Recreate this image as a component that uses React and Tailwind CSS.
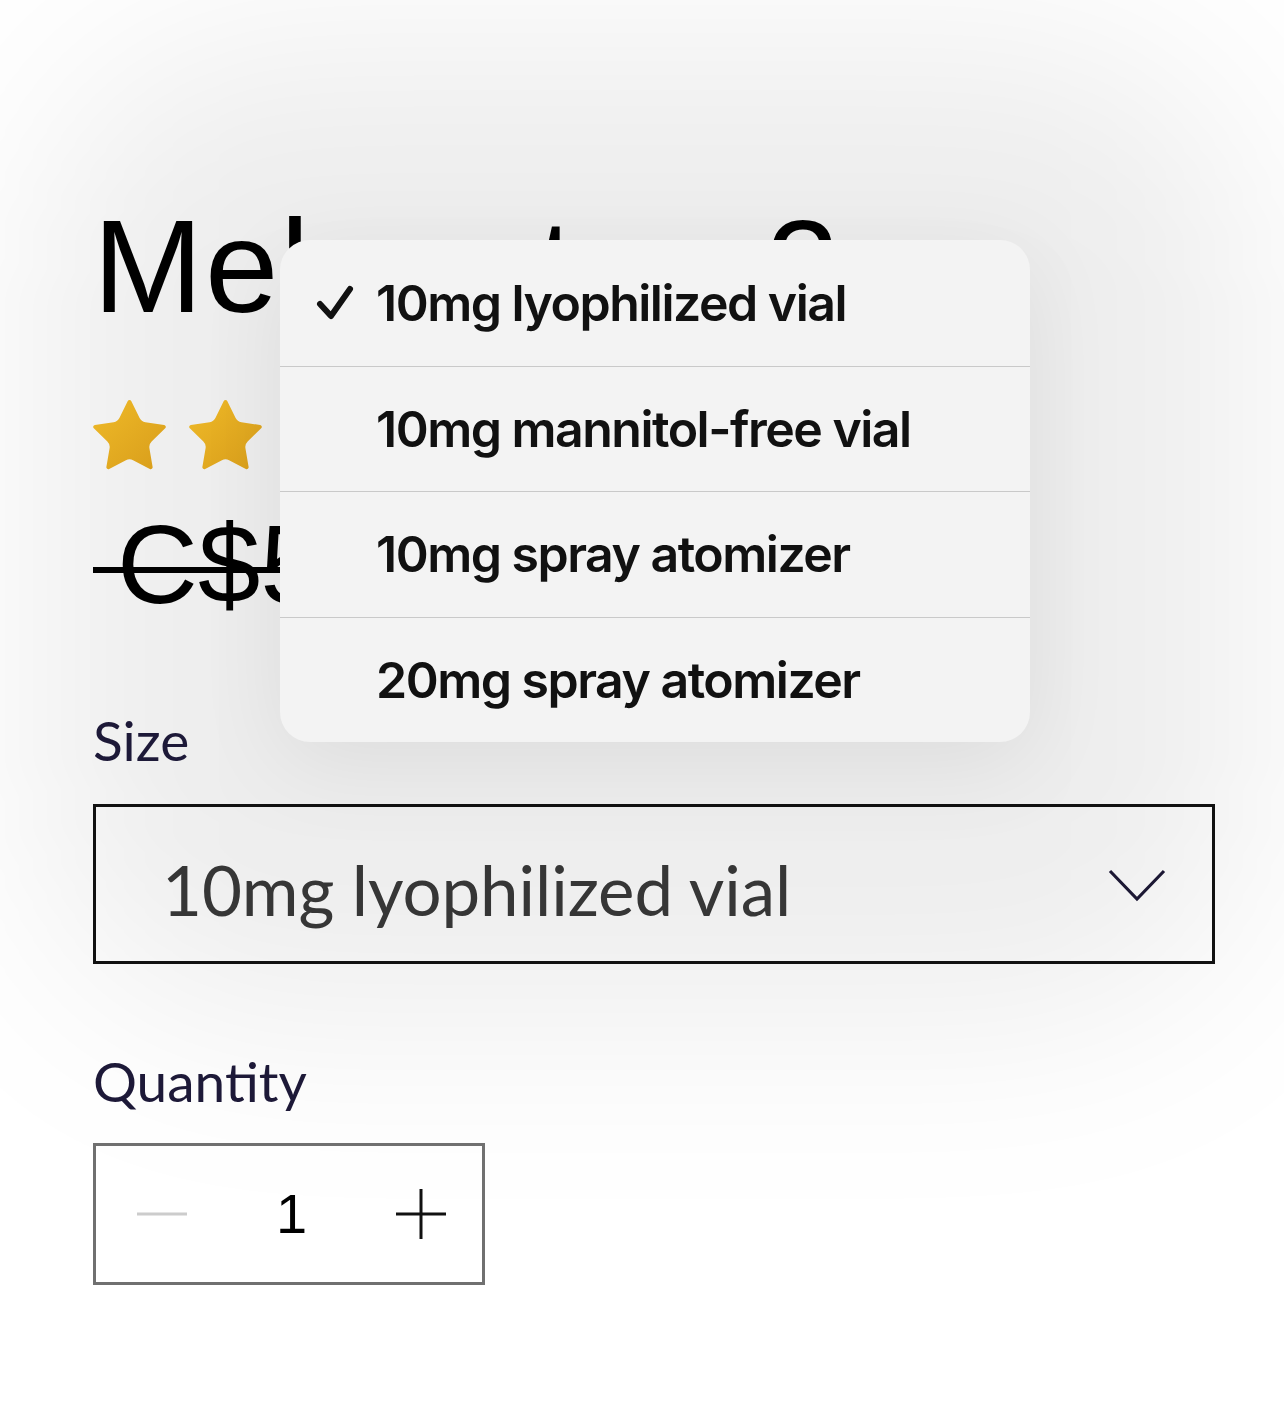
const options = [
  '10mg lyophilized vial',
  '10mg mannitol-free vial',
  '10mg spray atomizer',
  '20mg spray atomizer',
]

const Star = ({ id }) => (
  <svg width="73" height="70" viewBox="2 2 20 19.3" className="shrink-0">
    <defs>
      <linearGradient id={id} x1="0" y1="0" x2="1" y2="1">
        <stop offset="0" stopColor="#efba28" />
        <stop offset="1" stopColor="#d89d1b" />
      </linearGradient>
    </defs>
    <path
      d="M11.525 2.295a.53.53 0 0 1 .95 0l2.31 4.679a2.123 2.123 0 0 0 1.595 1.16l5.166.756a.53.53 0 0 1 .294.904l-3.736 3.638a2.123 2.123 0 0 0-.611 1.878l.882 5.14a.53.53 0 0 1-.771.56l-4.618-2.428a2.122 2.122 0 0 0-1.973 0L6.396 21.01a.53.53 0 0 1-.77-.56l.881-5.139a2.122 2.122 0 0 0-.611-1.879L2.16 9.795a.53.53 0 0 1 .294-.906l5.165-.755a2.122 2.122 0 0 0 1.597-1.16z"
      fill={`url(#${id})`}
    />
  </svg>
)

const App = () => {
  return (
    <div className="relative w-full min-h-[1414px] overflow-hidden bg-white font-['Lato',sans-serif]">
      {/* soft haze the menu throws over the page */}
      <div className="pointer-events-none absolute left-[40px] top-[40px] h-[980px] w-[1210px] rounded-[220px] bg-black/[0.07] blur-[100px]"></div>

      <div className="relative pl-[93px] pr-[69px] pt-[201px]">
        <h1 className="font-['Liberation_Sans',Arial,sans-serif] text-[132px] leading-none tracking-[2px] text-black whitespace-nowrap">
          Melanotan 2
        </h1>

        <div className="mt-[67px] flex gap-[23px]">
          {[0, 1, 2, 3, 4].map((i) => (
            <Star key={i} id={`star-${i}`} />
          ))}
        </div>

        <div className="relative mt-[39px] inline-block">
          <span className="block pl-[24px] font-['Liberation_Sans',Arial,sans-serif] text-[112px] leading-none text-black">
            C$59.99
          </span>
          <span className="absolute left-0 right-0 top-[58px] h-[6px] bg-black"></span>
        </div>

        <p className="mt-[92px] text-[55px] leading-none text-[#1d1938]">Size</p>

        <div className="mt-[36px] flex h-[160px] items-center justify-between border-[3px] border-[#111] pl-[66px] pr-[46px]">
          <span className="mt-[10px] text-[69px] leading-none tracking-[-0.1px] text-[#363636]">10mg lyophilized vial</span>
          <svg width="58" height="34" viewBox="0 0 58 34" className="mb-[-2px]">
            <polyline points="2,3 29,31 56,3" fill="none" stroke="#1c1834" strokeWidth="3.2" />
          </svg>
        </div>

        <p className="mt-[90px] text-[55px] leading-none text-[#1d1938]">Quantity</p>

        <div className="mt-[34px] flex h-[142px] w-[392px] items-center justify-between border-[3px] border-[#707070] pl-[41px] pr-[36px]">
          <svg width="50" height="4" viewBox="0 0 50 4">
            <line x1="0" y1="2" x2="50" y2="2" stroke="#cccccc" strokeWidth="3" />
          </svg>
          <span className="font-['Liberation_Sans',Arial,sans-serif] text-[56px] leading-none text-black">1</span>
          <svg width="50" height="50" viewBox="0 0 50 50">
            <line x1="0" y1="25" x2="50" y2="25" stroke="#111" strokeWidth="3" />
            <line x1="25" y1="0" x2="25" y2="50" stroke="#111" strokeWidth="3" />
          </svg>
        </div>
      </div>

      {/* native option menu */}
      <div className="absolute left-[280px] top-[240px] w-[750px] overflow-hidden rounded-[30px] bg-[#f3f3f3] shadow-[0_20px_90px_rgba(0,0,0,0.07)]">
        {options.map((opt, i) => (
          <div
            key={opt}
            className={`flex h-[125.5px] items-center ${i > 0 ? 'border-t border-[#c9c9c9]' : ''}`}
          >
            <div className="flex w-[96px] justify-end pr-[22px]">
              {i === 0 && (
                <svg width="38" height="36" viewBox="0 0 38 36">
                  <polyline
                    points="4,19 15,31 34,4"
                    fill="none"
                    stroke="#111"
                    strokeWidth="6"
                    strokeLinecap="round"
                    strokeLinejoin="round"
                  />
                </svg>
              )}
            </div>
            <span className="font-['Inter',sans-serif] text-[50px] font-semibold leading-none tracking-[-1.5px] text-[#111]">
              {opt}
            </span>
          </div>
        ))}
      </div>
    </div>
  )
}

export default App
